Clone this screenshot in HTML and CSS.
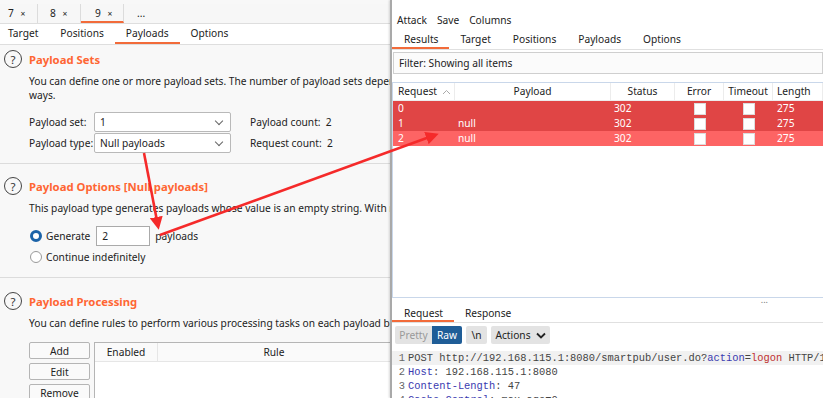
FILE: index.html
```html
<!DOCTYPE html>
<html lang="en">
<head>
    <meta charset="UTF-8">
    <title>Intruder attack</title>
    <link rel="stylesheet" href="styles.css">
</head>
<body>
    <div class="screen">
        <div class="left">
            <div class="doc-tabs">
                <div class="doc-tab">7 <span class="x">×</span></div>
                <div class="doc-tab">8 <span class="x">×</span></div>
                <div class="doc-tab active">9 <span class="x">×</span></div>
                <div class="doc-tab more">...</div>
            </div>
            <div class="sub-tabs">
                <div class="sub-tab">Target</div>
                <div class="sub-tab">Positions</div>
                <div class="sub-tab active">Payloads</div>
                <div class="sub-tab">Options</div>
            </div>

            <div class="section first">
                <div class="section-head">
                    <span class="help">?</span>
                    <h2>Payload Sets</h2>
                </div>
                <p class="desc">You can define one or more payload sets. The number of payload sets depends on the attack type defined in the Positions tab. Various payload types are available for each payload set, and each payload type can be customized in different<br>ways.</p>
                <div class="form-rows">
                    <div class="form-row">
                        <label>Payload set:</label>
                        <div class="select">1 <span class="caret"></span></div>
                        <span class="count">Payload count:&nbsp; 2</span>
                    </div>
                    <div class="form-row">
                        <label>Payload type:</label>
                        <div class="select">Null payloads <span class="caret"></span></div>
                        <span class="count">Request count:&nbsp; 2</span>
                    </div>
                </div>
            </div>

            <div class="section">
                <div class="section-head">
                    <span class="help">?</span>
                    <h2>Payload Options [Null payloads]</h2>
                </div>
                <p class="desc">This payload type generates payloads whose value is an empty string. With no payload markers configured, this can be used to repeatedly issue the base request unmodified.</p>
                <div class="radios">
                    <div class="radio-row">
                        <span class="radio on"></span>
                        <span>Generate</span>
                        <span class="num-input">2</span>
                        <span>payloads</span>
                    </div>
                    <div class="radio-row">
                        <span class="radio"></span>
                        <span>Continue indefinitely</span>
                    </div>
                </div>
            </div>

            <div class="section last">
                <div class="section-head">
                    <span class="help">?</span>
                    <h2>Payload Processing</h2>
                </div>
                <p class="desc">You can define rules to perform various processing tasks on each payload before it is used.</p>
                <div class="rules">
                    <div class="rule-buttons">
                        <button>Add</button>
                        <button>Edit</button>
                        <button>Remove</button>
                    </div>
                    <div class="rule-table">
                        <div class="rule-head">
                            <span class="col-enabled">Enabled</span>
                            <span class="col-rule">Rule</span>
                        </div>
                    </div>
                </div>
            </div>
        </div>

        <div class="right">
            <div class="menu">
                <span>Attack</span>
                <span>Save</span>
                <span>Columns</span>
            </div>
            <div class="win-tabs">
                <div class="win-tab active">Results</div>
                <div class="win-tab">Target</div>
                <div class="win-tab">Positions</div>
                <div class="win-tab">Payloads</div>
                <div class="win-tab">Options</div>
            </div>
            <div class="filter">Filter: Showing all items</div>

            <div class="results">
                <div class="res-row res-head">
                    <span class="c-req">Request <svg class="sort" width="9" height="6" viewBox="0 0 9 6"><path d="M1 5 4.5 1.5 8 5" fill="none" stroke="#aaa" stroke-width="1"/></svg></span>
                    <span class="c-pay center">Payload</span>
                    <span class="c-status center">Status</span>
                    <span class="c-err center">Error</span>
                    <span class="c-to center">Timeout</span>
                    <span class="c-len">Length</span>
                </div>
                <div class="res-row hit">
                    <span class="c-req">0</span>
                    <span class="c-pay"></span>
                    <span class="c-status">302</span>
                    <span class="c-err center"><i class="box"></i></span>
                    <span class="c-to center"><i class="box"></i></span>
                    <span class="c-len">275</span>
                </div>
                <div class="res-row hit">
                    <span class="c-req">1</span>
                    <span class="c-pay">null</span>
                    <span class="c-status">302</span>
                    <span class="c-err center"><i class="box"></i></span>
                    <span class="c-to center"><i class="box"></i></span>
                    <span class="c-len">275</span>
                </div>
                <div class="res-row hit light">
                    <span class="c-req">2</span>
                    <span class="c-pay">null</span>
                    <span class="c-status">302</span>
                    <span class="c-err center"><i class="box"></i></span>
                    <span class="c-to center"><i class="box"></i></span>
                    <span class="c-len">275</span>
                </div>
            </div>

            <div class="grip">...</div>
            <div class="win-tabs msg-tabs">
                <div class="win-tab active">Request</div>
                <div class="win-tab">Response</div>
            </div>
            <div class="toolbar">
                <span class="tb-btn pretty">Pretty</span>
                <span class="tb-btn raw">Raw</span>
                <span class="tb-btn nl">\n</span>
                <span class="tb-btn actions">Actions <svg width="10" height="7" viewBox="0 0 10 7"><path d="M1 1.5 5 5.5 9 1.5" fill="none" stroke="#222" stroke-width="1.8"/></svg></span>
            </div>
            <div class="code">
                <div class="line first"><span class="ln">1</span>POST http://192.168.115.1:8080/smartpub/user.do?<span class="k">action</span>=<span class="v">logon</span> HTTP/1.1</div>
                <div class="line"><span class="ln">2</span><span class="k">Host</span>: 192.168.115.1:8080</div>
                <div class="line"><span class="ln">3</span><span class="k">Content-Length</span>: 47</div>
                <div class="line"><span class="ln">4</span><span class="k">Cache-Control</span>: max-age=0</div>
            </div>
        </div>

        <svg class="arrows" width="823" height="398" viewBox="0 0 823 398">
            <defs>
                <marker id="head" markerWidth="5" markerHeight="5" refX="3.5" refY="2.5" orient="auto" markerUnits="strokeWidth">
                    <path d="M0 0 5 2.5 0 5z" fill="#f52a2a"/>
                </marker>
            </defs>
            <line x1="144" y1="153" x2="158" y2="226" stroke="#f52a2a" stroke-width="2.6" marker-end="url(#head)"/>
            <line x1="160" y1="235" x2="435" y2="135" stroke="#f52a2a" stroke-width="2.6" marker-end="url(#head)"/>
        </svg>
    </div>
</body>
</html>
```

FILE: styles.css
```css
* {
    box-sizing: border-box;
    margin: 0;
    padding: 0;
}

body {
    font-family: "Noto Sans", "Open Sans", sans-serif;
    font-size: 10.2px;
    color: #222;
    background: #fff;
}

.screen {
    position: relative;
    width: 823px;
    height: 398px;
    overflow: hidden;
    display: flex;
}

/* left: intruder payloads tab */

.left {
    width: 390px;
    flex-shrink: 0;
    background: #f8f8f8;
    padding-top: 4px;
    overflow: hidden;
}

.doc-tabs {
    display: flex;
    height: 20px;
    background: #f7f7f7;
    border-bottom: 1px solid #dedede;
}

.doc-tab {
    width: 43px;
    padding-left: 12px;
    line-height: 19px;
    border-right: 1px solid #dcdcdc;
}

.doc-tab:first-child {
    width: 38px;
    padding-left: 8px;
}

.doc-tab .x {
    font-size: 8.5px;
    margin-left: 4px;
}

.doc-tab.active {
    padding-left: 14px;
    border-bottom: 2px solid #f26b3a;
}

.doc-tab.more {
    border-right: none;
    padding-left: 13px;
}

.sub-tabs {
    display: flex;
    height: 21px;
    background: #fff;
    border-bottom: 1px solid #dedede;
    margin-left: -3px;
}

.sub-tab {
    padding: 0 11px;
    line-height: 19px;
}

.sub-tab.active {
    border-bottom: 2px solid #f26b3a;
}

.section {
    padding: 12px 0 10px 29px;
    border-bottom: 1px solid #dcdcdc;
}

.section.first {
    padding-top: 4px;
}

.section.last {
    padding-top: 13px;
    border-bottom: none;
}

.section-head {
    display: flex;
    align-items: center;
    height: 20px;
    margin-left: -25px;
}

.help {
    width: 18px;
    height: 18px;
    border: 1.4px solid #444;
    border-radius: 50%;
    display: flex;
    align-items: center;
    justify-content: center;
    font-size: 11.5px;
    color: #333;
    margin-right: 7px;
}

h2 {
    font-size: 11.3px;
    font-weight: bold;
    color: #ff6633;
}

.desc {
    margin-top: 5px;
    line-height: 14px;
    white-space: nowrap;
}

.form-rows {
    margin-top: 9px;
}

.form-row {
    display: flex;
    align-items: center;
    height: 21px;
}

.form-row label {
    width: 65px;
    flex-shrink: 0;
    white-space: nowrap;
}

.select {
    width: 137px;
    height: 20px;
    border: 1px solid #b9b9b9;
    border-radius: 2px;
    background: #fff;
    padding-left: 5px;
    line-height: 18px;
    position: relative;
}

.caret {
    position: absolute;
    right: 8px;
    top: 5px;
    width: 6px;
    height: 6px;
    border-right: 1px solid #666;
    border-bottom: 1px solid #666;
    transform: rotate(45deg);
}

.count {
    margin-left: 19px;
    white-space: nowrap;
}

.radios {
    margin-top: 10px;
}

.radio-row {
    display: flex;
    align-items: center;
    gap: 4px;
    height: 21px;
    margin-left: 1px;
}

.radio {
    width: 12px;
    height: 12px;
    border: 1px solid #999;
    border-radius: 50%;
    background: #fff;
}

.radio.on {
    border: 3px solid #1b63a8;
}

.num-input {
    width: 54px;
    height: 20px;
    border: 1px solid #aaa;
    background: #fff;
    padding-left: 5px;
    line-height: 18px;
    margin: 0 1px 0 2px;
}

.rules {
    display: flex;
    margin-top: 12px;
    gap: 4px;
}

.rule-buttons {
    display: flex;
    flex-direction: column;
    gap: 4px;
}

.rule-buttons button {
    width: 61px;
    height: 17px;
    border: 1px solid #b5b5b5;
    border-radius: 2px;
    background: #fafafa;
    font-family: inherit;
    font-size: 10.2px;
    color: #222;
}

.rule-table {
    flex: 1;
    border: 1px solid #b5b5b5;
    border-right: none;
    background: #fff;
    height: 70px;
}

.rule-head {
    display: flex;
    height: 19px;
    line-height: 18px;
    background: #fafafa;
    border-bottom: 1px solid #e6e6e6;
}

.col-enabled {
    width: 63px;
    text-align: center;
    border-right: 1px solid #e6e6e6;
}

.col-rule {
    flex: 1;
    text-align: center;
}

/* right: attack results window */

.right {
    flex: 1;
    background: #fff;
    border-left: 2px solid #a9a9a9;
    box-shadow: -1px 0 2px rgba(0, 0, 0, 0.15);
    padding-top: 11px;
    overflow: hidden;
}

.menu {
    display: flex;
    gap: 10px;
    padding-left: 5px;
    height: 19px;
    line-height: 18px;
}

.win-tabs {
    display: flex;
    height: 20px;
    border-bottom: 1px solid #e0e0e0;
}

.win-tab {
    padding: 0 11px;
    line-height: 18px;
}

.win-tab.active {
    padding-left: 12px;
    border-bottom: 2px solid #f26b3a;
}

.filter {
    margin: 2px 0 0 1px;
    height: 22px;
    line-height: 20px;
    padding-left: 5px;
    border: 1px solid #cfcfcf;
    background: #fbfbfb;
}

.results {
    margin-top: 8px;
    height: 216px;
    border: 1px solid #c9d7ea;
    border-right: none;
}

.res-row {
    display: flex;
    height: 15px;
    line-height: 15px;
}

.res-head {
    height: 18px;
    line-height: 17px;
    background: #fff;
    border-bottom: 1px solid #ececec;
}

.res-head > span {
    border-right: 1px solid #ececec;
}

.sort {
    margin-left: 2px;
}

.hit {
    background: #e04545;
    color: #fff;
}

.hit.light {
    background: #fd6464;
}

.c-req {
    width: 62px;
    padding-left: 5px;
    white-space: nowrap;
}

.c-pay {
    width: 156px;
    padding-left: 3px;
}

.c-status {
    width: 64px;
    padding-left: 3px;
}

.c-err {
    width: 49px;
}

.c-to {
    width: 49px;
}

.c-len {
    flex: 1;
    padding-left: 4px;
}

.center {
    display: flex;
    justify-content: center;
    align-items: center;
    padding-left: 0;
}

.box {
    width: 12px;
    height: 12px;
    background: #fff;
    border: 1px solid #ddd;
}

.grip {
    text-align: right;
    padding-right: 55px;
    height: 6px;
    line-height: 4px;
    font-size: 9px;
    color: #777;
}

.msg-tabs {
    height: 19px;
}

.toolbar {
    display: flex;
    margin: 3px 0 0 3px;
    height: 18px;
}

.tb-btn {
    background: #e3e3e3;
    border-radius: 2px;
    line-height: 18px;
    display: flex;
    align-items: center;
    justify-content: center;
    gap: 5px;
    margin-right: 4px;
}

.tb-btn.pretty {
    width: 37px;
    color: #999;
    margin-right: 0;
    border-radius: 2px 0 0 2px;
}

.tb-btn.raw {
    width: 30px;
    background: #1f5d97;
    color: #fff;
    border-radius: 0 2px 2px 0;
}

.tb-btn.nl {
    width: 21px;
}

.tb-btn.actions {
    width: 59px;
}

.code {
    margin-top: 7px;
    font-family: "Liberation Mono", monospace;
    font-size: 10.4px;
    color: #444;
}

.line {
    height: 14px;
    line-height: 14px;
    white-space: nowrap;
}

.line.first {
    background: #f1f1f1;
}

.ln {
    display: inline-block;
    width: 13px;
    text-align: right;
    margin-right: 3px;
    color: #666;
}

.k {
    color: #3a3ab0;
}

.v {
    color: #c03030;
}

.arrows {
    position: absolute;
    left: 0;
    top: 0;
    pointer-events: none;
}
```
